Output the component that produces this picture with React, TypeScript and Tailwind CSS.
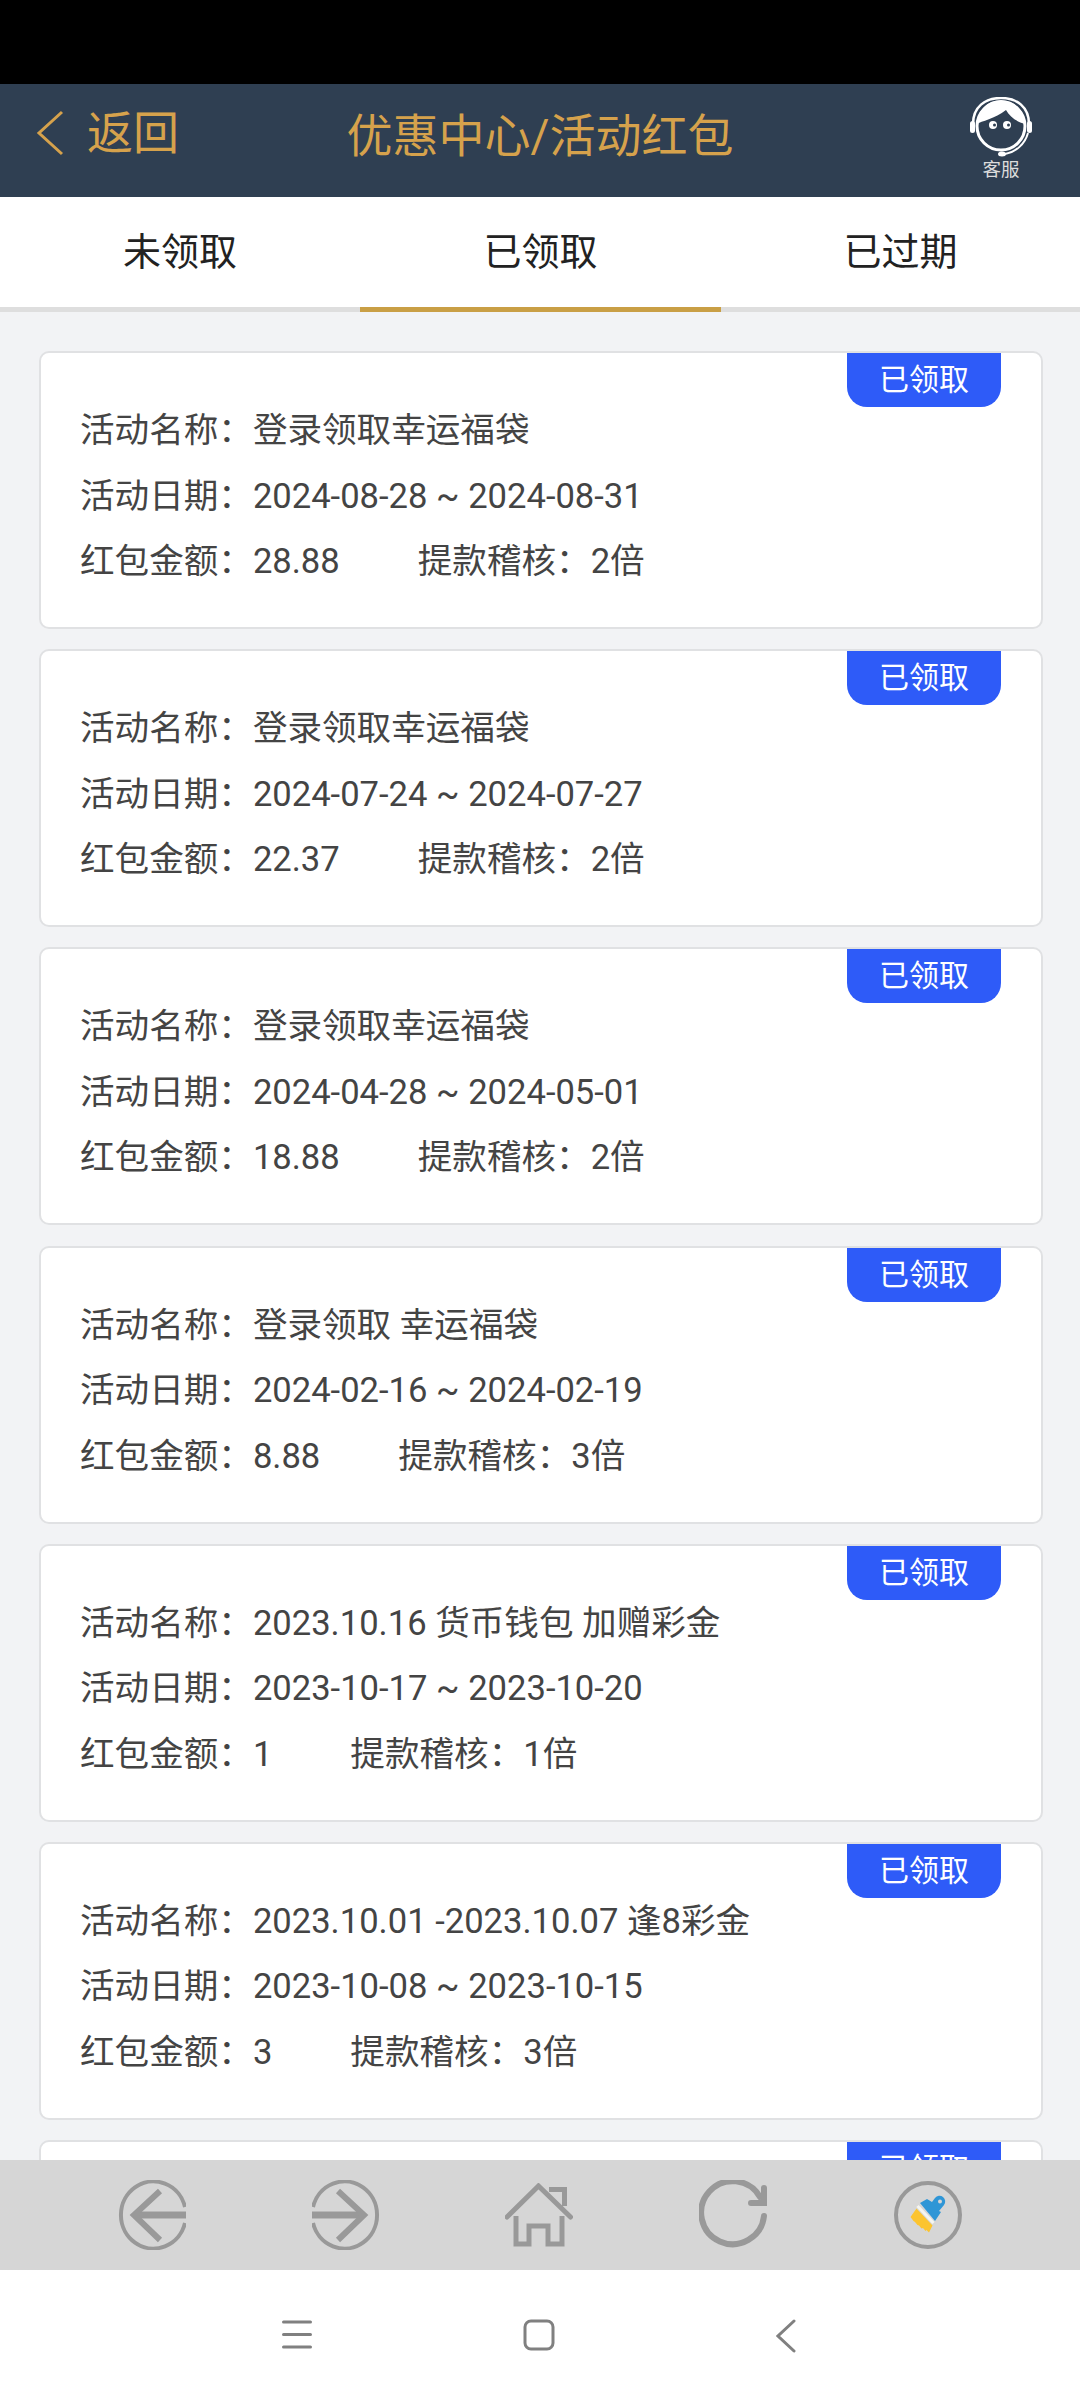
const FONT = "font-['Roboto','Noto_Sans_CJK_SC',sans-serif]";
const COLON = '\uFF1A';

const coupons = [
  { name: '登录领取幸运福袋', date: '2024-08-28 ~ 2024-08-31', amount: '28.88', audit: '2倍' },
  { name: '登录领取幸运福袋', date: '2024-07-24 ~ 2024-07-27', amount: '22.37', audit: '2倍' },
  { name: '登录领取幸运福袋', date: '2024-04-28 ~ 2024-05-01', amount: '18.88', audit: '2倍' },
  { name: '登录领取 幸运福袋', date: '2024-02-16 ~ 2024-02-19', amount: '8.88', audit: '3倍' },
  { name: '2023.10.16 货币钱包 加赠彩金', date: '2023-10-17 ~ 2023-10-20', amount: '1', audit: '1倍' },
  { name: '2023.10.01 -2023.10.07 逢8彩金', date: '2023-10-08 ~ 2023-10-15', amount: '3', audit: '3倍' },
  { name: '登录领取幸运福袋', date: '2023-09-28 ~ 2023-09-30', amount: '8.88', audit: '2倍' },
];

function ServiceIcon() {
  return (
    <svg width="64" height="62" viewBox="0 0 64 62" fill="none">
      <path d="M4 27C4 10 16 1 32 1s28 9 28 26" stroke="#fff" strokeWidth="2.5" />
      <circle cx="32" cy="29" r="24" stroke="#fff" strokeWidth="3" />
      <path d="M8 27C12 24 26 22 37 13C41 20 48 25 56 27A24 24 0 0 0 8 27z" fill="#fff" />
      <circle cx="24" cy="28" r="4" fill="#fff" />
      <circle cx="38" cy="28" r="4" fill="#fff" />
      <circle cx="25.5" cy="28" r="1.5" fill="#2f3f52" />
      <circle cx="39.5" cy="28" r="1.5" fill="#2f3f52" />
      <rect x="1" y="24" width="5" height="12" rx="2.5" fill="#fff" />
      <rect x="58" y="24" width="5" height="12" rx="2.5" fill="#fff" />
      <path d="M59 36C56 47 47 55 36 57" stroke="#fff" strokeWidth="2" />
      <ellipse cx="33" cy="57" rx="4" ry="2.5" fill="#fff" />
    </svg>
  );
}

function CouponCard({ coupon }: { coupon: (typeof coupons)[number] }) {
  return (
    <div className="relative h-[278px] shrink-0 rounded-[10px] border-2 border-[#e0e1e3] bg-white pl-[39px] pt-[45px] text-[34.6px] leading-[65.5px] text-[#444444]">
      <div className="absolute right-[40px] top-0 flex h-[54px] w-[154px] items-center justify-center rounded-b-[20px] bg-[#2e5bf8] text-[30px] leading-none text-white">
        已领取
      </div>
      <div>活动名称{COLON}{coupon.name}</div>
      <div>活动日期{COLON}{coupon.date}</div>
      <div className="flex">
        <span className="mr-[78px]">红包金额{COLON}{coupon.amount}</span>
        <span>提款稽核{COLON}{coupon.audit}</span>
      </div>
    </div>
  );
}

function BottomBar() {
  const c = '#999999';
  return (
    <div className="flex h-[110px] shrink-0 items-center justify-between bg-[#d6d6d6] pl-[118px] pr-[118px]">
      <svg width="68" height="70" viewBox="0 0 68 70" fill="none" stroke={c}>
        <path d="M67 27A32.5 33.5 0 1 0 67 43" strokeWidth="4" />
        <path d="M68 35H16" strokeWidth="7" />
        <path d="M42 11L16 35l26 25" strokeWidth="6" />
      </svg>
      <svg width="68" height="70" viewBox="0 0 68 70" fill="none" stroke={c}>
        <path d="M1 27A32.5 33.5 0 1 1 1 43" strokeWidth="4" />
        <path d="M0 35h52" strokeWidth="7" />
        <path d="M26 11l26 24-26 25" strokeWidth="6" />
      </svg>
      <svg width="68" height="64" viewBox="0 0 68 64" fill="none" stroke={c} strokeWidth="5">
        <path d="M2 34L33.500 3l32 31" strokeLinecap="round" />
        <path d="M11 33v28h13V43h19v18h14V33" />
        <path d="M44 6.500h15.500V23" />
      </svg>
      <svg width="70" height="70" viewBox="0 0 70 70" fill="none" stroke={c} strokeWidth="6" strokeLinecap="round">
        <path d="M61 17A31.500 31.500 0 1 0 65 36" />
        <path d="M65 8v15H52" />
      </svg>
      <svg width="68" height="70" viewBox="0 0 68 70" fill="none">
        <circle cx="34" cy="35" r="32" stroke={c} strokeWidth="4" />
        <path d="M26 23L33 19l5 3 3-4a5.500 5.500 0 0 1 9 7l-5 6 2 1-6 9z" fill="#2f96d6" />
        <circle cx="46" cy="21.500" r="2" fill="#d6d6d6" />
        <path d="M23.500 26L39.500 43" stroke="#f5f5f0" strokeWidth="3" />
        <path d="M22.500 28.500L38.500 45.500L35 52.500L32.500 50L31.500 51L29 48L27.500 48.500L25 45.500L23.500 45L21 42L19.500 41L16.500 37z" fill="#fcc42f" />
      </svg>
    </div>
  );
}

function SystemNav() {
  return (
    <div className="flex h-[130px] shrink-0 items-start bg-white pl-[282px] pt-[49px]">
      <svg width="30" height="32" viewBox="0 0 30 32" fill="none" stroke="#808080" strokeWidth="3" strokeLinecap="round">
        <path d="M1.500 3h27M1.500 15.500h27M1.500 28h27" />
      </svg>
      <svg className="ml-[211px]" width="32" height="32" viewBox="0 0 32 32" fill="none" stroke="#808080" strokeWidth="3">
        <rect x="2" y="2" width="28" height="28" rx="6" />
      </svg>
      <svg className="ml-[221px]" width="20" height="34" viewBox="0 0 20 34" fill="none" stroke="#808080" strokeWidth="3" strokeLinecap="round">
        <path d="M18 2L2 17l16 15" />
      </svg>
    </div>
  );
}

export default function App() {
  return (
    <div className={`flex h-[2400px] w-[1080px] flex-col overflow-hidden bg-white ${FONT}`}>
      <div className="h-[84px] shrink-0 bg-black" />

      <header className="relative flex h-[113px] shrink-0 items-center justify-center bg-[#2f3f52] pb-[10px] text-[46px] leading-none text-[#d6a24c]">
        <div className="absolute left-[36px] top-[26px] flex items-center">
          <svg width="28" height="46" viewBox="0 0 28 46" fill="none" stroke="#d6a24c" strokeWidth="3">
            <path d="M26 2L3 23l23 21" />
          </svg>
          <span className="ml-[23px]">返回</span>
        </div>
        <h1 className="font-normal">优惠中心/活动红包</h1>
        <div className="absolute right-[47px] top-[13px] flex flex-col items-center">
          <ServiceIcon />
          <span className="text-[18.5px] leading-[22px] text-[#dcdcdc]">客服</span>
        </div>
      </header>

      <nav className="flex h-[115px] shrink-0 border-b-[5px] border-[#dedede] text-[38px] text-[#222222]">
        <div className="flex w-[360px] items-center justify-center">未领取</div>
        <div className="-mb-[5px] flex w-[361px] items-center justify-center border-b-[5px] border-[#c99f45] pb-[5px]">
          <span className="-mb-[5px]">已领取</span>
        </div>
        <div className="flex w-[359px] items-center justify-center">已过期</div>
      </nav>

      <main className="flex min-h-0 flex-1 flex-col gap-[20.2px] overflow-hidden bg-[#f2f3f5] pl-[39px] pr-[37px] pt-[39px]">
        {coupons.map((coupon, i) => (
          <CouponCard key={i} coupon={coupon} />
        ))}
      </main>

      <BottomBar />
      <SystemNav />
    </div>
  );
}
